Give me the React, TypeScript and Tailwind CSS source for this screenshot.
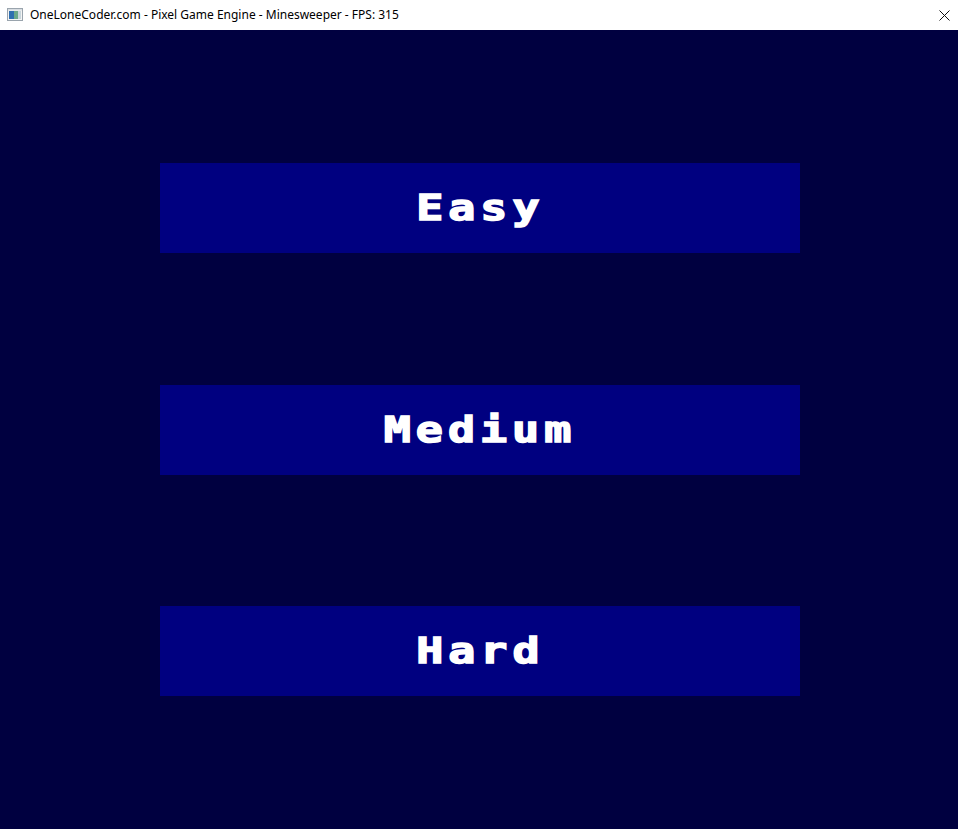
import React from "react";

const Btn = ({ label, cls }: { label: string; cls: string }) => (
  <div className={"w-[640px] h-[90px] bg-[#000080] flex items-center justify-center " + cls}>
    <span
      className="inline-block text-white font-bold text-[36px] leading-none tracking-[4px] scale-x-[1.25] [-webkit-text-stroke:1.5px_white]"
      style={{ fontFamily: '"DejaVu Sans Mono", "Liberation Mono", monospace' }}
    >
      {label}
    </span>
  </div>
);

export default function App() {
  return (
    <div className="w-[958px] h-[829px] flex flex-col overflow-hidden">
      <div className="h-[30px] bg-white flex items-center shrink-0">
        <svg width="16" height="14" viewBox="0 0 16 14" className="ml-[7px] mr-[7px]">
          <rect x="0.5" y="0.5" width="15" height="12" fill="#f4f4f4" stroke="#9aa4ad" />
          <rect x="2" y="3" width="5" height="8" fill="#2f6fb0" />
          <rect x="7" y="3" width="4" height="8" fill="#6aa88a" />
          <rect x="11" y="3" width="3" height="8" fill="#c9d6dc" />
          <rect x="1" y="1" width="14" height="1.5" fill="#d8dde2" />
        </svg>
        <span
          className="text-[12px] text-black"
          style={{ fontFamily: '"Noto Sans", "Liberation Sans", sans-serif' }}
        >
          OneLoneCoder.com - Pixel Game Engine - Minesweeper - FPS: 315
        </span>
        <div className="ml-auto mr-[8px] w-[12px] h-[12px] flex items-center justify-center">
          <svg width="11" height="11" viewBox="0 0 11 11">
            <path d="M0.5 0.5 L10.5 10.5 M10.5 0.5 L0.5 10.5" stroke="#111" strokeWidth="1" />
          </svg>
        </div>
      </div>
      <div className="flex-1 bg-[#000040] flex flex-col items-start pl-[160px] pt-[133px]">
        <Btn label="Easy" cls="" />
        <Btn label="Medium" cls="mt-[132px]" />
        <Btn label="Hard" cls="mt-[131px]" />
      </div>
    </div>
  );
}
